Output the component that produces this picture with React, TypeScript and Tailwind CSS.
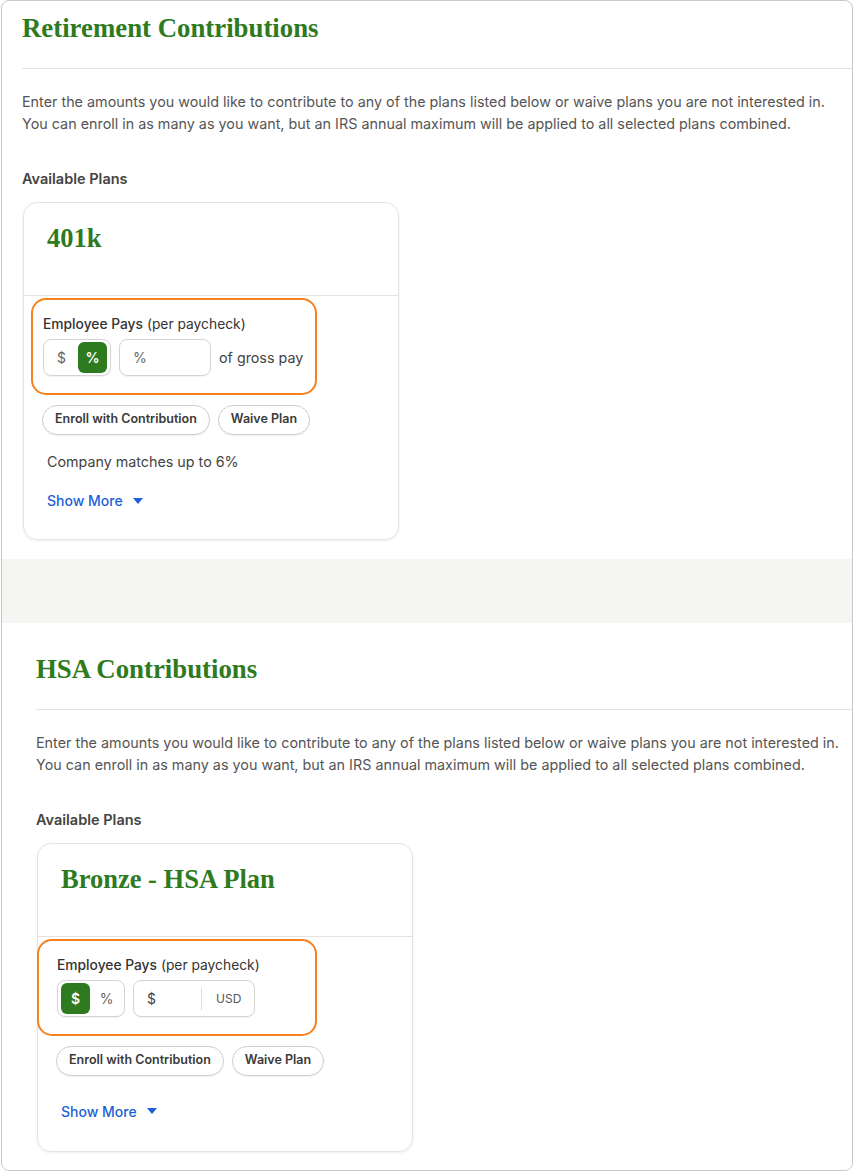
import React from 'react'

const serif = { fontFamily: '"Liberation Serif", "DejaVu Serif", serif' }

const intro = [
  'Enter the amounts you would like to contribute to any of the plans listed below or waive plans you are not interested in.',
  'You can enroll in as many as you want, but an IRS annual maximum will be applied to all selected plans combined.',
]

const ShowMore = () => (
  <div className="flex items-center gap-[10px] text-[14px] font-medium text-[#1d5fd8]">
    <span>Show More</span>
    <svg width="10" height="6" viewBox="0 0 10 6"><path d="M0 0h10L5 6z" fill="#1d5fd8" /></svg>
  </div>
)

const Buttons = () => (
  <div className="flex gap-2">
    <button className="h-[30px] px-3 rounded-full border border-[#cfcfcf] bg-white text-[12.5px] font-semibold text-[#3a3a3a] shadow-[0_1px_1px_rgba(0,0,0,0.06)]">Enroll with Contribution</button>
    <button className="h-[30px] px-3 rounded-full border border-[#cfcfcf] bg-white text-[12.5px] font-semibold text-[#3a3a3a] shadow-[0_1px_1px_rgba(0,0,0,0.06)]">Waive Plan</button>
  </div>
)

const Toggle = ({ mode }: { mode: '$' | '%' }) => (
  <div className="flex items-center h-[37px] w-[68px] rounded-[8px] border border-[#d4d4d4] px-[3px] gap-[2px] shadow-[0_1px_1px_rgba(0,0,0,0.05)]">
    {(['$', '%'] as const).map(k => (
      <div key={k} className={`h-[31px] flex-1 rounded-[6px] flex items-center justify-center text-[14px] ${mode === k ? 'bg-[#2e7a1e] text-white font-semibold' : 'text-[#666]'}`}>{k}</div>
    ))}
  </div>
)

const Label = () => (
  <div className="text-[13.8px] text-[#333]"><span className="font-medium">Employee Pays</span> (per paycheck)</div>
)

export default function App() {
  return (
    <div className="bg-white" style={{ fontFamily: 'Inter, "Liberation Sans", sans-serif' }}>
      <div className="ml-[1px] w-[852px] h-[1171px] border border-[#c9c9c9] rounded-[8px] overflow-hidden bg-white">
        {/* Retirement */}
        <div className="pl-[20px] pt-[12px] h-[558px]">
          <h1 className="text-[26.8px] leading-[30px] font-bold text-[#2e7a1e]" style={serif}>Retirement Contributions</h1>
          <div className="mt-[25px] border-t border-[#e2e2e2]" />
          <div className="mt-[22px] text-[14.35px] leading-[22px] text-[#555]">
            {intro.map(l => <div key={l}>{l}</div>)}
          </div>
          <div className="mt-[33px] text-[14.5px] font-semibold text-[#444]">Available Plans</div>
          <div className="mt-[12px] ml-[1px] w-[376px] h-[338px] rounded-[14px] border border-[#e3e3e3] shadow-[0_1px_3px_rgba(0,0,0,0.07)]">
            <div className="h-[93px] pl-[23px] pt-[16px] border-b border-[#e2e2e2]">
              <div className="text-[26.5px] font-bold text-[#2e7a1e]" style={serif}>401k</div>
            </div>
            <div className="ml-[7px] mt-[2px] w-[286px] h-[97px] rounded-[15px] border-2 border-[#f5821f] pl-[10px] pt-[14px]">
              <Label />
              <div className="mt-[5px] flex items-center gap-2">
                <Toggle mode="%" />
                <div className="h-[37px] w-[92px] rounded-[8px] border border-[#d4d4d4] flex items-center pl-[13px] text-[14px] text-[#666] shadow-[0_1px_1px_rgba(0,0,0,0.05)]">%</div>
                <span className="text-[14.3px] text-[#444]">of gross pay</span>
              </div>
            </div>
            <div className="ml-[18px] mt-[10px]"><Buttons /></div>
            <div className="ml-[23px] mt-[16px] text-[14.3px] text-[#444]">Company matches up to 6%</div>
            <div className="ml-[23px] mt-[18px]"><ShowMore /></div>
          </div>
        </div>
        <div className="h-[64px] bg-[#f5f5f3]" />
        {/* HSA */}
        <div className="pl-[34px] pt-[31px]">
          <h1 className="text-[26.8px] leading-[30px] font-bold text-[#2e7a1e]" style={serif}>HSA Contributions</h1>
          <div className="mt-[25px] border-t border-[#e2e2e2]" />
          <div className="mt-[22px] text-[14.35px] leading-[22px] text-[#555]">
            {intro.map(l => <div key={l}>{l}</div>)}
          </div>
          <div className="mt-[33px] text-[14.5px] font-semibold text-[#444]">Available Plans</div>
          <div className="mt-[12px] ml-[1px] w-[376px] h-[309px] rounded-[14px] border border-[#e3e3e3] shadow-[0_1px_3px_rgba(0,0,0,0.07)]">
            <div className="h-[93px] pl-[23px] pt-[16px] border-b border-[#e2e2e2]">
              <div className="text-[26.5px] font-bold text-[#2e7a1e]" style={serif}>Bronze - HSA Plan</div>
            </div>
            <div className="-ml-[1px] mt-[2px] w-[280px] h-[97px] rounded-[15px] border-2 border-[#f5821f] pl-[18px] pt-[14px]">
              <Label />
              <div className="mt-[5px] flex items-center gap-2">
                <Toggle mode="$" />
                <div className="h-[37px] w-[122px] rounded-[8px] border border-[#d4d4d4] flex items-center pl-[13px] text-[14px] text-[#444] shadow-[0_1px_1px_rgba(0,0,0,0.05)]">
                  <span className="w-[54px]">$</span>
                  <span className="h-[22px] border-l border-[#ddd]" />
                  <span className="ml-[14px] text-[12px] text-[#555]">USD</span>
                </div>
              </div>
            </div>
            <div className="ml-[18px] mt-[10px]"><Buttons /></div>
            <div className="ml-[23px] mt-[25px]"><ShowMore /></div>
          </div>
        </div>
      </div>
    </div>
  )
}
